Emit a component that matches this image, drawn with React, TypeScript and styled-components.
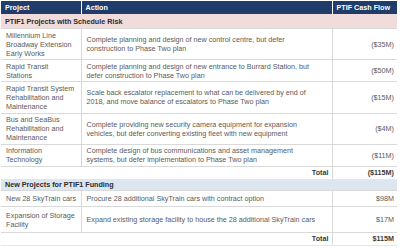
import React from "react";
import styled, { createGlobalStyle } from "styled-components";

const GlobalStyle = createGlobalStyle`
  html, body {
    margin: 0;
    padding: 0;
    background: #ffffff;
  }
`;

type Row = { project: string[]; action: string[]; cash: string };

const riskRows: Row[] = [
  {
    project: ["Millennium Line", "Broadway Extension", "Early Works"],
    action: ["Complete planning and design of new control centre, but defer", "construction to Phase Two plan"],
    cash: "($35M)",
  },
  {
    project: ["Rapid Transit", "Stations"],
    action: ["Complete planning and design of new entrance to Burrard Station, but", "defer construction to Phase Two plan"],
    cash: "($50M)",
  },
  {
    project: ["Rapid Transit System", "Rehabilitation and", "Maintenance"],
    action: ["Scale back escalator replacement to what can be delivered by end of", "2018, and move balance of escalators to Phase Two plan"],
    cash: "($15M)",
  },
  {
    project: ["Bus and SeaBus", "Rehabilitation and", "Maintenance"],
    action: ["Complete providing new security camera equipment for expansion", "vehicles, but defer converting existing fleet with new equipment"],
    cash: "($4M)",
  },
  {
    project: ["Information", "Technology"],
    action: ["Complete design of bus communications and asset management", "systems, but defer implementation to Phase Two plan"],
    cash: "($11M)",
  },
];

const newRows: Row[] = [
  {
    project: ["New 28 SkyTrain cars"],
    action: ["Procure 28 additional SkyTrain cars with contract option"],
    cash: "$98M",
  },
  {
    project: ["Expansion of Storage", "Facility"],
    action: ["Expand existing storage facility to house the 28 additional SkyTrain cars"],
    cash: "$17M",
  },
];

const Page = styled.div`
  padding: 1px 3px 0 1px;
  font-family: "Liberation Sans", Arial, sans-serif;
  font-size: 7.2px;
  line-height: 9px;
  color: #5a5a5a;
`;

const Table = styled.table`
  width: 396px;
  border-collapse: collapse;
  table-layout: fixed;
`;

const HeadCell = styled.th`
  background: #1f3c6b;
  color: #ffffff;
  font-weight: bold;
  text-align: left;
  height: 13px;
  padding: 0 4px;
  border-left: 1px solid #ffffff;
  &:first-child {
    border-left: none;
  }
`;

const SectionCell = styled.td<{ $tone: "risk" | "new" }>`
  background: ${(p) => (p.$tone === "risk" ? "#f2dcdb" : "#dce6f1")};
  color: #2b2b2b;
  font-weight: bold;
  height: ${(p) => (p.$tone === "risk" ? "14px" : "10px")};
  padding: 0 4px;
  border-bottom: 1px solid #d9d9d9;
`;

const Cell = styled.td<{ $align?: "left" | "right"; $roomy?: boolean }>`
  padding: ${(p) => (p.$roomy ? "3.2px" : "1.6px")} 3px;
  padding-left: 5px;
  vertical-align: middle;
  text-align: ${(p) => p.$align ?? "left"};
  border-bottom: 1px solid #d9d9d9;
  border-left: 1px solid #d9d9d9;
  &:first-child {
    border-left: none;
  }
`;

const TotalCell = styled.td<{ $first?: boolean }>`
  height: 12px;
  padding: 0 3px;
  text-align: right;
  font-weight: bold;
  color: #3a3a3a;
  border-bottom: 1px solid #e6e6e6;
  border-left: ${(p) => (p.$first ? "none" : "1px solid #d9d9d9")};
`;

const Lines = ({ lines }: { lines: string[] }) => (
  <>
    {lines.map((l, i) => (
      <div key={i}>{l}</div>
    ))}
  </>
);

const BodyRows = ({ rows, roomy }: { rows: Row[]; roomy?: boolean }) => (
  <>
    {rows.map((r, i) => (
      <tr key={i}>
        <Cell $roomy={roomy}>
          <Lines lines={r.project} />
        </Cell>
        <Cell $roomy={roomy}>
          <Lines lines={r.action} />
        </Cell>
        <Cell $roomy={roomy} $align="right">
          {r.cash}
        </Cell>
      </tr>
    ))}
  </>
);

export default function App() {
  return (
    <>
      <GlobalStyle />
      <Page>
        <Table>
          <colgroup>
            <col style={{ width: 80 }} />
            <col style={{ width: 251 }} />
            <col style={{ width: 65 }} />
          </colgroup>
          <thead>
            <tr>
              <HeadCell>Project</HeadCell>
              <HeadCell>Action</HeadCell>
              <HeadCell>PTIF Cash Flow</HeadCell>
            </tr>
          </thead>
          <tbody>
            <tr>
              <SectionCell $tone="risk" colSpan={3}>
                PTIF1 Projects with Schedule Risk
              </SectionCell>
            </tr>
            <BodyRows rows={riskRows} />
            <tr>
              <TotalCell $first colSpan={2}>
                Total
              </TotalCell>
              <TotalCell>($115M)</TotalCell>
            </tr>
            <tr>
              <SectionCell $tone="new" colSpan={3}>
                New Projects for PTIF1 Funding
              </SectionCell>
            </tr>
            <BodyRows rows={newRows} roomy />
            <tr>
              <TotalCell $first colSpan={2}>
                Total
              </TotalCell>
              <TotalCell>$115M</TotalCell>
            </tr>
          </tbody>
        </Table>
      </Page>
    </>
  );
}
